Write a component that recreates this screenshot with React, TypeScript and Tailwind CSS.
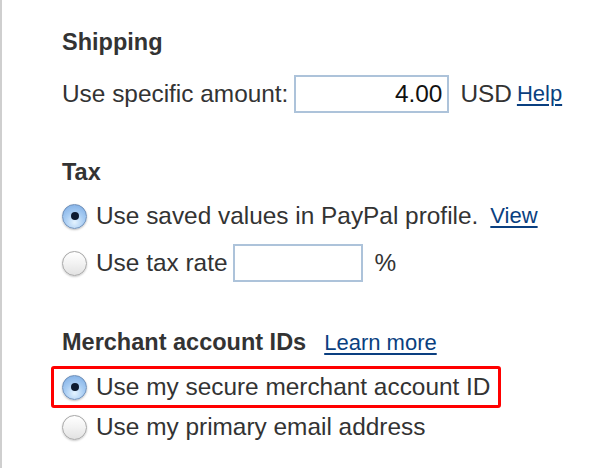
import type { ReactNode } from "react";

function Radio({ checked }: { checked?: boolean }) {
  if (checked) {
    return (
      <span className="relative flex h-[25px] w-[25px] shrink-0 items-center justify-center rounded-full border border-[#6f8fb8] bg-[radial-gradient(circle_at_50%_75%,#e4f3ff_0%,#a9cdf3_45%,#78a9e3_100%)] shadow-[0_1px_2px_rgba(0,0,0,0.25)]">
        <span className="h-[8px] w-[8px] rounded-full bg-[#0d1a30]" />
      </span>
    );
  }
  return (
    <span className="h-[25px] w-[25px] shrink-0 rounded-full border border-[#a6a6a6] bg-[linear-gradient(180deg,#ffffff_0%,#f2f2f2_50%,#e2e2e2_100%)] shadow-[0_1px_2px_rgba(0,0,0,0.2)]" />
  );
}

function Link({ children, className = "" }: { children: ReactNode; className?: string }) {
  return (
    <a href="#" className={`text-[22px] text-[#0a3f80] underline decoration-[2px] underline-offset-[3px] ${className}`}>
      {children}
    </a>
  );
}

function Heading({ children }: { children: ReactNode }) {
  return <h3 className="text-[23.5px] font-bold leading-[28px] text-[#333]">{children}</h3>;
}

export default function App() {
  return (
    <div
      className="h-[468px] w-[616px] border-l-[2px] border-[#cfcfcf] bg-white pl-[60px] pt-[28px] text-[24.4px] leading-[28px] text-[#333]"
      style={{ fontFamily: '"Liberation Sans", Arial, sans-serif' }}
    >
      <Heading>Shipping</Heading>
      <div className="mt-[19px] flex h-[38px] items-center">
        <span>Use specific amount:</span>
        <input
          readOnly
          value="4.00"
          className="ml-[6px] h-[38px] w-[155px] border-[2px] border-[#adc3da] bg-white pr-[5px] text-right text-[24.4px] text-[#111] outline-none"
        />
        <span className="ml-[11px]">USD</span>
        <Link className="ml-[5px]">Help</Link>
      </div>

      <div className="mt-[45px]">
        <Heading>Tax</Heading>
      </div>
      <div className="mt-[11px] flex h-[38px] items-center">
        <Radio checked />
        <span className="ml-[9px]">Use saved values in PayPal profile.</span>
        <Link className="ml-[12px]">View</Link>
      </div>
      <div className="mt-[9px] flex h-[38px] items-center">
        <Radio />
        <span className="ml-[9px]">Use tax rate</span>
        <input readOnly className="ml-[5px] h-[38px] w-[130px] border-[2px] border-[#adc3da] bg-white outline-none" />
        <span className="ml-[12px]">%</span>
      </div>

      <div className="mt-[46px] flex items-baseline">
        <Heading>Merchant account IDs</Heading>
        <Link className="ml-[18px]">Learn more</Link>
      </div>
      <div className="mt-[9px] -ml-[11px] flex h-[42px] w-[450px] items-center rounded-[3px] border-[3px] border-[#ff0000] pl-[8px]">
        <Radio checked />
        <span className="ml-[9px]">Use my secure merchant account ID</span>
      </div>
      <div className="flex h-[38px] items-center">
        <Radio />
        <span className="ml-[9px]">Use my primary email address</span>
      </div>
    </div>
  );
}
